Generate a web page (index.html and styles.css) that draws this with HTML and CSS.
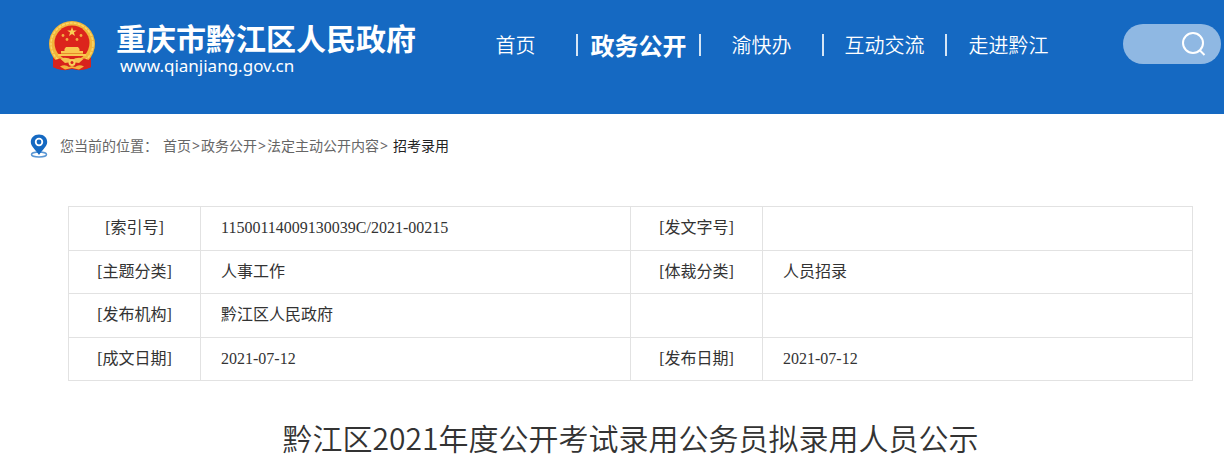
FILE: index.html
```html
<!DOCTYPE html>
<html lang="zh-CN">
  <head>
    <meta charset="UTF-8" />
    <meta name="viewport" content="width=device-width, initial-scale=1.0" />
    <title>重庆市黔江区人民政府</title>
    <link rel="stylesheet" href="styles.css">
  </head>
  <body>
    <header class="header">
      <a class="brand" href="#">
        <svg class="emblem" viewBox="0 0 48 52" aria-hidden="true">
          <path d="M5 32 L5 47 Q12 51 19 49 L24 47 L29 49 Q36 51 43 47 L43 32 Z" fill="#d8231c" />
          <circle cx="24" cy="24" r="23" fill="#f2b63a" />
          <circle cx="24" cy="24" r="21" fill="none" stroke="#f9d768" stroke-width="1.5" stroke-dasharray="3 1" />
          <circle cx="24" cy="23" r="17.500" fill="#dc241c" />
          <path d="M24 7 L25.200 10.400 L28.800 10.400 L25.900 12.600 L27 16 L24 13.900 L21 16 L22.100 12.600 L19.200 10.400 L22.800 10.400 Z" fill="#f9cf55" />
          <g fill="#f3ad43">
            <circle cx="15" cy="15.500" r="1.400" />
            <circle cx="33" cy="15.500" r="1.400" />
            <circle cx="19" cy="19.500" r="1.400" />
            <circle cx="29" cy="19.500" r="1.400" />
          </g>
          <path d="M18 27 H30 L31.500 29 V31 H35 V34 H38 V36 H10 V34 H13 V31 H16.500 V29 Z" fill="#f9c84f" />
          <path d="M13 33.500 H35" stroke="#e88a2c" stroke-width="1" />
          <path d="M7 40 Q14 37 24 38 Q34 37 41 40 L43 47 Q34 52 24 49 Q14 52 5 47 Z" fill="#d8231c" />
          <path d="M12 38.500 Q19 36.500 24 40 Q29 36.500 36 38.500 L31 43 L24 42 L17 43 Z" fill="#f6c350" />
          <circle cx="24" cy="42.500" r="3.500" fill="#f9d15b" />
          <circle cx="24" cy="42.500" r="1.500" fill="#d8231c" />
          <path d="M12 46.500 Q17 44 21 47 L24 46 L27 47 Q31 44 36 46.500 L31 49.500 L24 48 L17 49.500 Z" fill="#f3b23c" />
        </svg>
        <span class="brand-text">
          <span class="brand-name">重庆市黔江区人民政府</span>
          <span class="brand-url">www.qianjiang.gov.cn</span>
        </span>
      </a>
      <nav class="nav">
        <a href="#">首页</a>
        <a class="active" href="#">政务公开</a>
        <a href="#">渝快办</a>
        <a href="#">互动交流</a>
        <a href="#">走进黔江</a>
      </nav>
      <form class="search" action="#">
        <input type="text" name="q" aria-label="搜索" />
        <button type="submit" aria-label="搜索">
          <svg viewBox="0 0 24 24" aria-hidden="true">
            <circle cx="11" cy="11" r="10" />
            <path d="M17.500 18 L22.500 23" />
          </svg>
        </button>
      </form>
    </header>

    <nav class="breadcrumb">
      <svg class="pin" viewBox="0 0 18 24" aria-hidden="true">
        <ellipse cx="9" cy="20.500" rx="7.500" ry="2.500" fill="none" stroke="#5b97d4" stroke-width="1.500" />
        <path d="M9 0.500 C4 0.500 0.800 3.800 0.800 8 C0.800 12.500 6 16 9 21 C12 16 17.200 12.500 17.200 8 C17.200 3.800 14 0.500 9 0.500 Z" fill="#1569c2" />
        <circle cx="9" cy="8" r="4.200" fill="#fff" />
        <circle cx="9" cy="8" r="2.400" fill="#1569c2" />
      </svg>
      <span>您当前的位置：</span>
      <span class="path"><a href="#">首页</a>&gt;<a href="#">政务公开</a>&gt;<a href="#">法定主动公开内容</a>&gt;</span>
      <a class="current" href="#">招考录用</a>
    </nav>

    <main>
      <table class="info">
        <tr>
          <th>[索引号]</th>
          <td>11500114009130039C/2021-00215</td>
          <th>[发文字号]</th>
          <td></td>
        </tr>
        <tr>
          <th>[主题分类]</th>
          <td>人事工作</td>
          <th>[体裁分类]</th>
          <td>人员招录</td>
        </tr>
        <tr>
          <th>[发布机构]</th>
          <td>黔江区人民政府</td>
          <th></th>
          <td></td>
        </tr>
        <tr>
          <th>[成文日期]</th>
          <td>2021-07-12</td>
          <th>[发布日期]</th>
          <td>2021-07-12</td>
        </tr>
      </table>
      <h1 class="title">黔江区2021年度公开考试录用公务员拟录用人员公示</h1>
    </main>
  </body>
</html>
```

FILE: styles.css
```css
* {
  box-sizing: border-box;
}

body {
  margin: 0;
  background: #fff;
  color: #333;
  font-family: "Noto Sans CJK SC", sans-serif;
}

a {
  color: inherit;
  text-decoration: none;
}

.header {
  display: flex;
  align-items: flex-start;
  height: 114px;
  padding: 20px 3px 0 48px;
  background: #1569c2;
  color: #fff;
}

.brand {
  display: flex;
  gap: 20px;
}

.emblem {
  width: 48px;
  height: 52px;
}

.brand-text {
  display: flex;
  flex-direction: column;
}

.brand-name {
  font-size: 30px;
  font-weight: 700;
  line-height: 34px;
}

.brand-url {
  padding-left: 4px;
  font-family: "Noto Sans", sans-serif;
  font-size: 17px;
  line-height: 24px;
}

.nav {
  display: flex;
  align-items: center;
  height: 50px;
  margin-left: 39px;
}

.nav a {
  width: 123px;
  border-right: 2px solid #d5e5f5;
  font-size: 20px;
  font-weight: 350;
  line-height: 22px;
  text-align: center;
  white-space: nowrap;
}

.nav a:last-child {
  border-right: 0;
}

.nav .active {
  font-size: 24px;
  font-weight: 700;
}

.search {
  display: flex;
  align-items: center;
  width: 98px;
  height: 40px;
  margin: 4px 0 0 auto;
  padding: 0 15px;
  border-radius: 20px;
  background: #8fb8e3;
}

.search input {
  flex: 1;
  min-width: 0;
  border: 0;
  outline: 0;
  background: none;
  color: #fff;
}

.search button {
  width: 24px;
  height: 24px;
  padding: 0;
  border: 0;
  background: none;
  cursor: pointer;
}

.search svg {
  display: block;
  fill: none;
  stroke: #fff;
  stroke-width: 2;
}

.breadcrumb {
  display: flex;
  align-items: center;
  gap: 5px;
  padding: 20px 30px;
  color: #666;
  font-family: "Noto Sans", "Noto Sans CJK SC", sans-serif;
  font-size: 14px;
  line-height: 24px;
}

.pin {
  width: 18px;
  height: 24px;
  margin-right: 7px;
}

.path {
  display: flex;
  gap: 1px;
}

.breadcrumb .current {
  color: #222;
}

main {
  padding: 28px 31px 0 68px;
}

.info {
  width: 100%;
  height: 175px;
  border-collapse: collapse;
  table-layout: fixed;
  font-family: "Liberation Serif", "Noto Sans CJK SC", serif;
  font-size: 16px;
  line-height: 24px;
}

.info th,
.info td {
  padding: 0 20px;
  border: 1px solid #e2e2e2;
  text-align: left;
}

.info th {
  width: 132px;
  padding: 0;
  font-weight: 400;
  text-align: center;
}

.title {
  margin: 34px 0 0;
  font-size: 30px;
  font-weight: 350;
  line-height: 44px;
  text-align: center;
}
```
